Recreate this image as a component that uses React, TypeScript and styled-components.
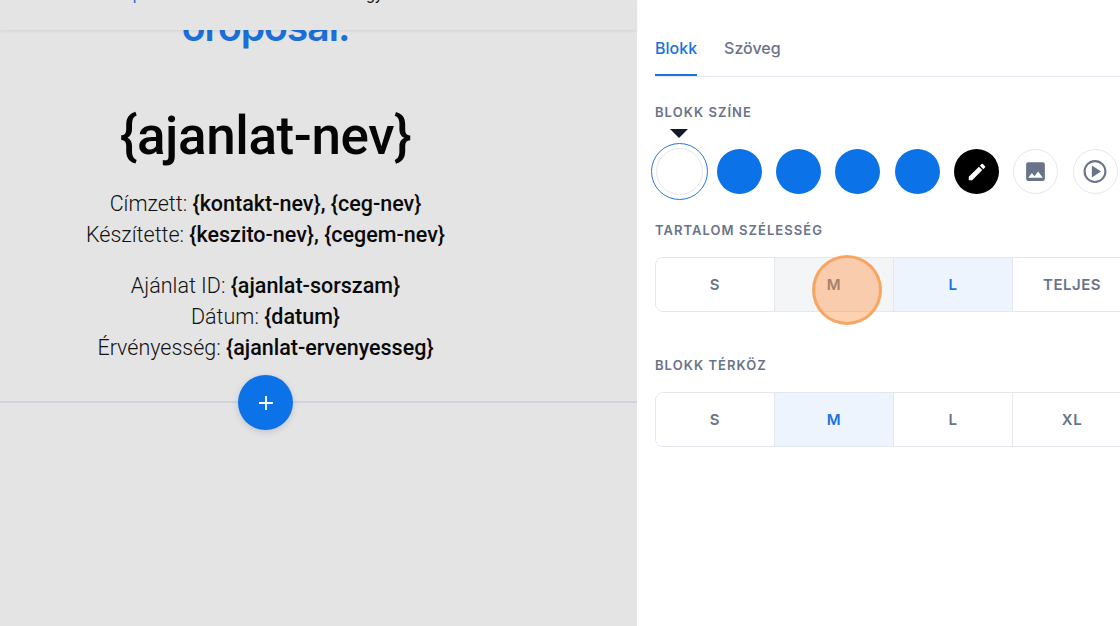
import { FC } from 'react';
import styled, { createGlobalStyle } from 'styled-components';

const GlobalStyle = createGlobalStyle`
  html, body {
    margin: 0;
    padding: 0;
    width: 1120px;
    height: 626px;
    overflow: hidden;
    background: #fff;
  }
`;

const Page = styled.div`
  display: flex;
  width: 1120px;
  height: 626px;
  overflow: hidden;
`;

const Canvas = styled.main`
  width: 637px;
  height: 626px;
  flex: none;
  background: #e4e4e5;
  font-family: Roboto, sans-serif;
  color: #111;
  text-align: center;
`;

const TopBar = styled.header`
  position: relative;
  height: 30px;
  overflow: hidden;
  box-shadow: 0 1px 3px rgba(0, 0, 0, 0.08);
`;

const TopLinks = styled.div`
  display: flex;
  width: 531px;
  justify-content: center;
  gap: 42px;
  margin-top: -14px;
  font-size: 16px;
  line-height: 18px;
  color: #111;
  white-space: nowrap;
`;

const TopLink = styled.span`
  color: #1a6fd8;
`;

const Column = styled.div`
  width: 531px;
`;

const LogoClip = styled.div`
  height: 21px;
  overflow: hidden;
`;

const Logo = styled.div`
  margin-top: -22px;
  font-family: Inter, sans-serif;
  font-size: 39px;
  line-height: 38px;
  font-weight: 600;
  color: #1a6fd8;
  letter-spacing: -1px;
`;

const Title = styled.h1`
  margin: 50px 0 0;
  font-size: 53px;
  line-height: 70px;
  font-weight: 500;
  color: #050505;
  letter-spacing: -0.4px;
`;

const InfoGroup = styled.div<{ $gap: number }>`
  margin-top: ${({ $gap }) => $gap}px;
  font-size: 21.5px;
  line-height: 31px;
  font-weight: 300;
  color: #111;
`;

const Strong = styled.strong`
  font-weight: 500;
  color: #0a0a0a;
`;

const AddRow = styled.div`
  position: relative;
  width: 637px;
  height: 55px;
  margin-top: 12px;

  &::before {
    content: '';
    position: absolute;
    left: 0;
    right: 0;
    top: 26px;
    height: 2px;
    background: #d2d3dd;
  }
`;

const AddSlot = styled.div`
  position: relative;
  display: flex;
  justify-content: center;
  width: 531px;
`;

const AddButton = styled.button`
  width: 55px;
  height: 55px;
  padding: 0;
  border: none;
  border-radius: 50%;
  background: #0b72e7;
  box-shadow: 0 2px 6px rgba(60, 70, 110, 0.2);
  display: flex;
  align-items: center;
  justify-content: center;
`;

const Panel = styled.aside`
  flex: 1;
  min-width: 0;
  background: #fff;
  font-family: Inter, sans-serif;
  padding: 0 0 0 18px;
`;

const Tabs = styled.nav`
  display: flex;
  gap: 27px;
  height: 77px;
  box-sizing: border-box;
  border-bottom: 1px solid #e5e7ee;
  padding-top: 37px;
`;

const Tab = styled.div<{ $active?: boolean }>`
  height: 39px;
  box-sizing: border-box;
  font-size: 16px;
  line-height: 22px;
  font-weight: 500;
  color: ${({ $active }) => ($active ? '#1a73e0' : '#69738a')};
  border-bottom: 2px solid ${({ $active }) => ($active ? '#1a73e0' : 'transparent')};
`;

const SectionLabel = styled.div<{ $top: number }>`
  margin-top: ${({ $top }) => $top}px;
  font-size: 13px;
  line-height: 16px;
  font-weight: 600;
  color: #69738a;
  letter-spacing: 1.05px;
`;

const Swatches = styled.div`
  display: flex;
  align-items: center;
  gap: 14.4px;
  margin-left: -4.5px;
  margin-top: 23px;
  height: 57px;
  width: 480px;
`;

const SelectedSwatch = styled.div`
  position: relative;
  width: 57px;
  height: 57px;
  flex: none;
  box-sizing: border-box;
  border-radius: 50%;
  border: 1px solid #2a78d8;
  display: flex;
  align-items: center;
  justify-content: center;
  margin-right: -5.4px;

  &::before {
    content: '';
    position: absolute;
    top: -15px;
    left: 18px;
    border-style: solid;
    border-width: 9px 9.5px 0;
    border-color: #111827 transparent transparent;
  }

  &::after {
    content: '';
    width: 47px;
    height: 47px;
    box-sizing: border-box;
    border-radius: 50%;
    border: 1px solid #e5e7ee;
  }
`;

const Swatch = styled.div`
  width: 45px;
  height: 45px;
  flex: none;
  border-radius: 50%;
  background: #0b72e7;
`;

const IconSwatch = styled.div<{ $dark?: boolean }>`
  width: 45px;
  height: 45px;
  flex: none;
  box-sizing: border-box;
  border-radius: 50%;
  background: ${({ $dark }) => ($dark ? '#000' : '#fff')};
  border: ${({ $dark }) => ($dark ? 'none' : '1px solid #e5e7ee')};
  display: flex;
  align-items: center;
  justify-content: center;
`;

const Segments = styled.div<{ $top: number }>`
  display: grid;
  grid-template-columns: repeat(4, 119px);
  width: 476px;
  height: 55px;
  box-sizing: border-box;
  margin-top: ${({ $top }) => $top}px;
  border: 1px solid #e5e7ee;
  border-radius: 8px;
  overflow: hidden;
`;

const Segment = styled.div<{ $state?: 'active' | 'hover' }>`
  display: flex;
  align-items: center;
  justify-content: center;
  font-size: 15px;
  font-weight: 600;
  letter-spacing: 0.5px;
  border-right: 1px solid #e5e7ee;
  background: ${({ $state }) =>
    $state === 'active' ? '#eef4fd' : $state === 'hover' ? '#f4f5f7' : '#fff'};
  color: ${({ $state }) => ($state === 'active' ? '#1a73e0' : '#69738a')};
`;

const CursorSpot = styled.div`
  position: absolute;
  left: 812px;
  top: 255px;
  width: 70px;
  height: 70px;
  box-sizing: border-box;
  border-radius: 50%;
  background: rgba(253, 148, 70, 0.42);
  border: 3px solid rgba(248, 160, 90, 0.9);
`;

const widths = [
  { label: 'S' },
  { label: 'M', state: 'hover' as const },
  { label: 'L', state: 'active' as const },
  { label: 'TELJES' },
];

const spacings = [
  { label: 'S' },
  { label: 'M', state: 'active' as const },
  { label: 'L' },
  { label: 'XL' },
];

const App: FC = () => {
  return (
    <>
      <GlobalStyle />
      <Page>
        <Canvas>
          <TopBar>
            <TopLinks>
              <TopLink>Kapcsolatok</TopLink>
              <TopLink>Munkáink</TopLink>
              <span>Ügyfelek</span>
            </TopLinks>
          </TopBar>
          <Column>
            <LogoClip>
              <Logo>oroposal.</Logo>
            </LogoClip>
            <Title>{'{ajanlat-nev}'}</Title>
            <InfoGroup $gap={17}>
              <div>
                Címzett: <Strong>{'{kontakt-nev}, {ceg-nev}'}</Strong>
              </div>
              <div>
                Készítette: <Strong>{'{keszito-nev}, {cegem-nev}'}</Strong>
              </div>
            </InfoGroup>
            <InfoGroup $gap={20}>
              <div>
                Ajánlat ID: <Strong>{'{ajanlat-sorszam}'}</Strong>
              </div>
              <div>
                Dátum: <Strong>{'{datum}'}</Strong>
              </div>
              <div>
                Érvényesség: <Strong>{'{ajanlat-ervenyesseg}'}</Strong>
              </div>
            </InfoGroup>
          </Column>
          <AddRow>
            <AddSlot>
              <AddButton aria-label="Új blokk">
                <svg width="18" height="18" viewBox="0 0 18 18">
                  <path d="M9 2v14M2 9h14" stroke="#fff" strokeWidth="1.8" />
                </svg>
              </AddButton>
            </AddSlot>
          </AddRow>
        </Canvas>
        <Panel>
          <Tabs>
            <Tab $active>Blokk</Tab>
            <Tab>Szöveg</Tab>
          </Tabs>
          <SectionLabel $top={27}>BLOKK SZÍNE</SectionLabel>
          <Swatches>
            <SelectedSwatch />
            <Swatch />
            <Swatch />
            <Swatch />
            <Swatch />
            <IconSwatch $dark>
              <svg width="22" height="22" viewBox="0 0 24 24" fill="#fff">
                <path d="M3 17.25V21h3.75L17.81 9.94l-3.75-3.75L3 17.25zM20.71 7.04a1 1 0 0 0 0-1.41l-2.34-2.34a1 1 0 0 0-1.41 0l-1.83 1.83 3.75 3.75 1.83-1.83z" />
              </svg>
            </IconSwatch>
            <IconSwatch>
              <svg width="25" height="25" viewBox="0 0 24 24" fill="#69738a">
                <path d="M21 19V5c0-1.100-.9-2-2-2H5c-1.100 0-2 .9-2 2v14c0 1.100.9 2 2 2h14c1.100 0 2-.9 2-2zM8.500 13.500l2.500 3.010L14.500 12l4.500 6H5l3.500-4.500z" />
              </svg>
            </IconSwatch>
            <IconSwatch>
              <svg width="25" height="25" viewBox="0 0 24 24" fill="none" stroke="#69738a" strokeWidth="2">
                <circle cx="11.500" cy="12" r="10" />
                <path d="M9.500 8l6 4-6 4z" fill="#69738a" />
              </svg>
            </IconSwatch>
          </Swatches>
          <SectionLabel $top={22}>TARTALOM SZÉLESSÉG</SectionLabel>
          <Segments $top={19}>
            {widths.map(w => (
              <Segment key={w.label} $state={w.state}>
                {w.label}
              </Segment>
            ))}
          </Segments>
          <SectionLabel $top={45}>BLOKK TÉRKÖZ</SectionLabel>
          <Segments $top={19}>
            {spacings.map(s => (
              <Segment key={s.label} $state={s.state}>
                {s.label}
              </Segment>
            ))}
          </Segments>
        </Panel>
        <CursorSpot />
      </Page>
    </>
  );
};

export default App;
